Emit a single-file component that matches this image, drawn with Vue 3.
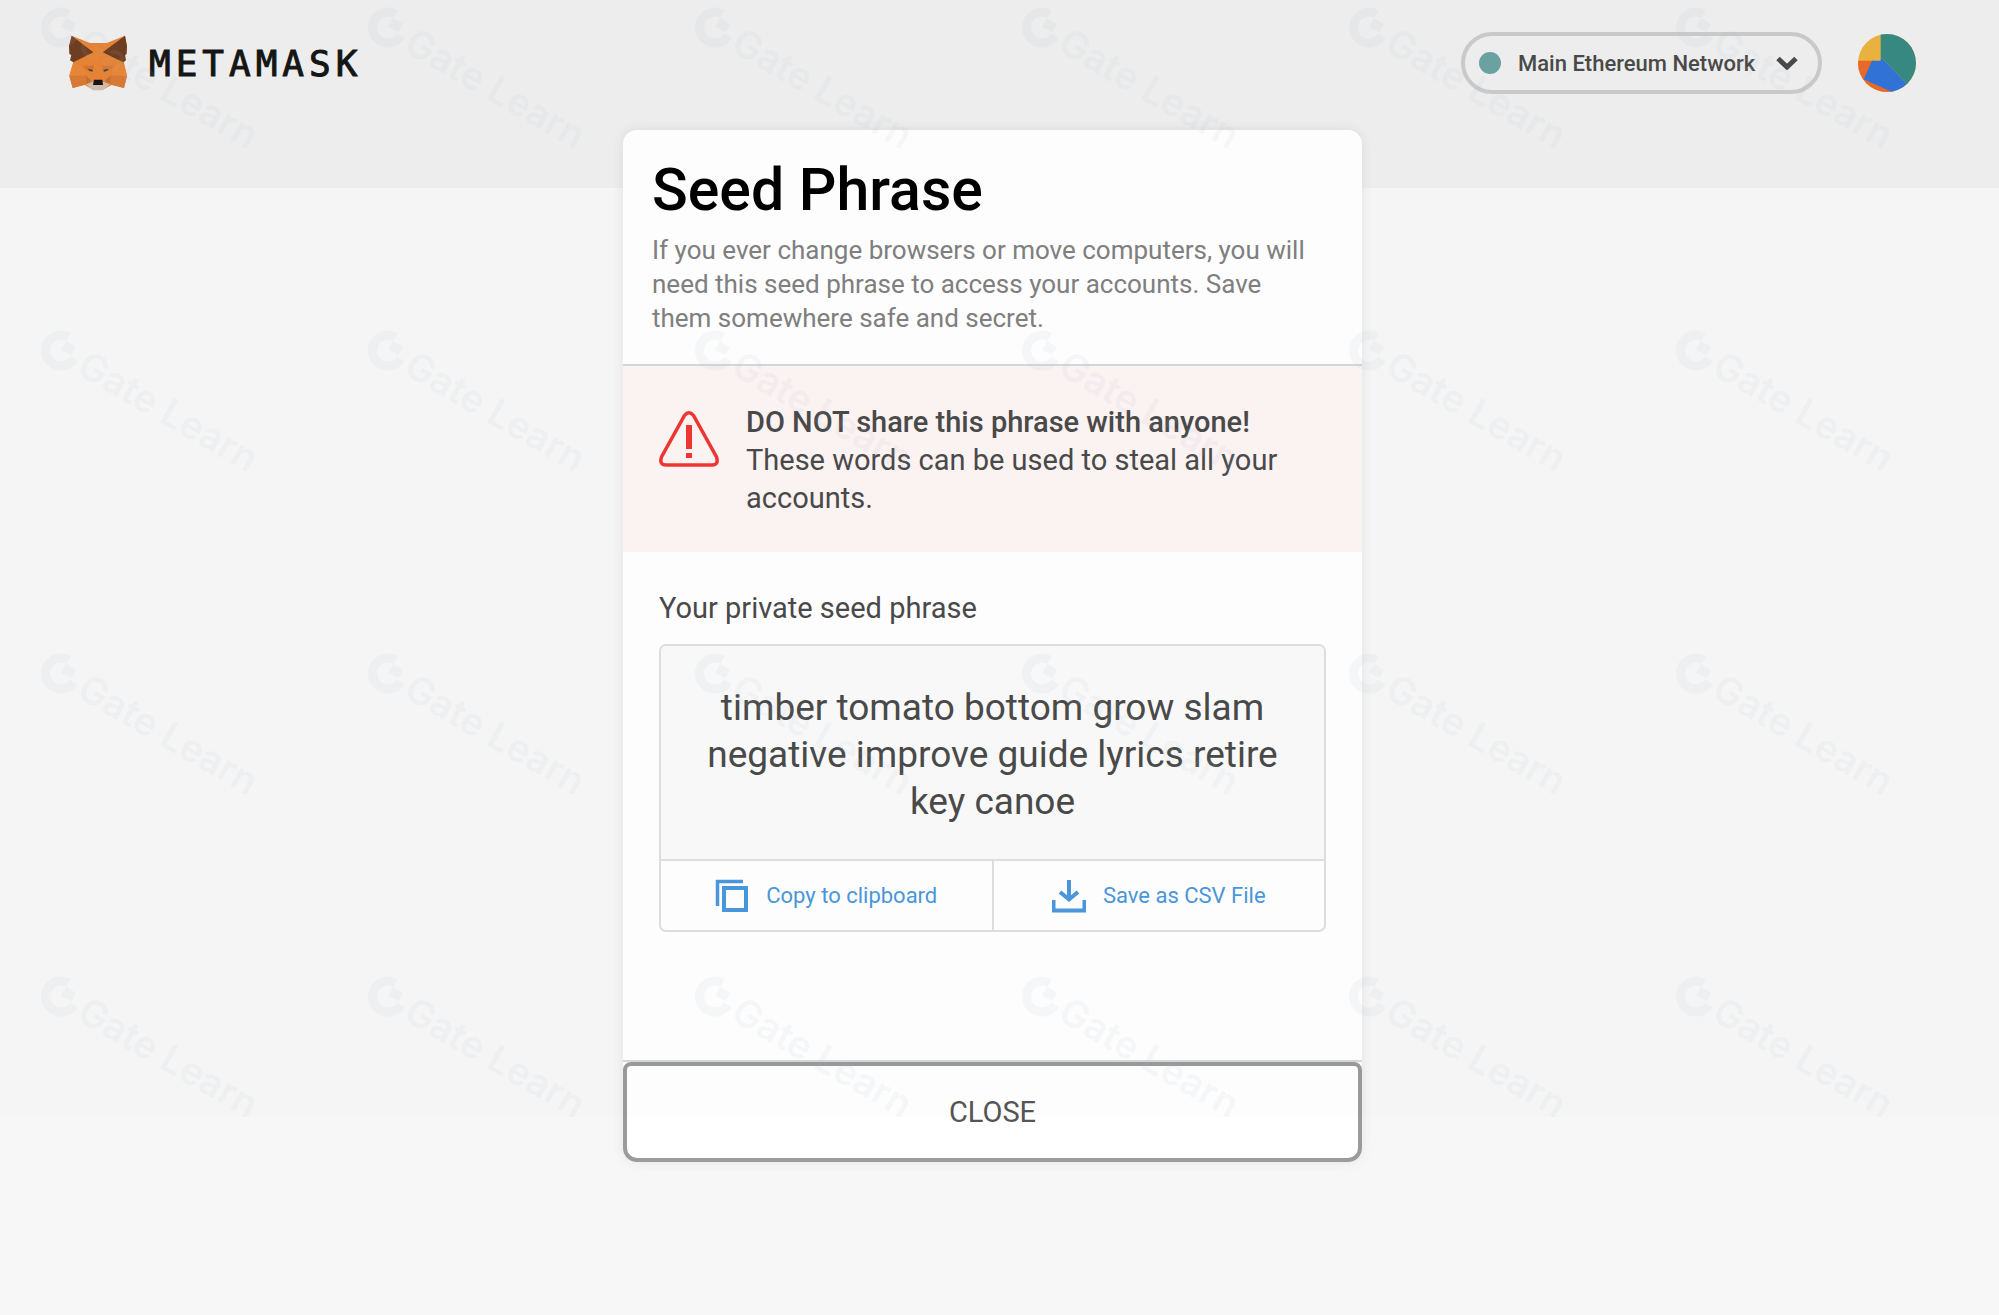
<template>
  <div class="page">
    <header class="top-bar">
      <a class="brand" href="#" aria-label="MetaMask">
        <svg class="fox" viewBox="55 46 178 168" aria-hidden="true">
          <polygon fill="#e88435" points="65,48 120,70 170,70 225,48 231,80 222,130 231,168 222,205 185,196 158,210 130,210 104,196 68,205 58,168 70,128 57,80" />
          <polygon fill="#d87a38" points="58,168 107,167 122,190 68,205" />
          <polygon fill="#d87a38" points="231,168 182,167 166,190 222,205" />
          <polygon fill="#e98838" points="70,128 58,168 107,167 97,140" />
          <polygon fill="#e98838" points="220,128 231,168 182,167 192,140" />
          <polygon fill="#6e3f22" points="65,48 130,98 70,128 60,122 64,106 58,103 57,80" />
          <polygon fill="#6e3f22" points="225,48 158,98 220,128 228,122 225,106 230,103 231,80" />
          <polygon fill="#d77532" points="98,139 132,137 129,154 110,152" />
          <polygon fill="#d77532" points="191,139 157,137 160,154 179,152" />
          <polygon fill="#c46f38" points="107,167 124,183 110,192" />
          <polygon fill="#c46f38" points="182,167 165,183 179,192" />
          <polygon fill="#3a4a52" points="113,147 128,150 128,156 118,154" />
          <polygon fill="#3a4a52" points="176,147 161,150 161,156 171,154" />
          <polygon fill="#d0bdb0" points="108,194 130,186 158,186 180,194 158,212 130,212" />
          <polygon fill="#161616" points="132,180 157,180 159,196 129,196" />
        </svg>
        <span class="wordmark">METAMASK</span>
      </a>

      <div class="account">
        <label class="network">
          <span class="network-dot"></span>
          <select v-model="network" class="network-select" aria-label="Network">
            <option v-for="name in networks" :key="name">{{ name }}</option>
          </select>
          <svg class="chevron" viewBox="0 0 22 14" aria-hidden="true">
            <path d="M2 2.500L11 11L20 2.500" fill="none" stroke="#4a4a4a" stroke-width="5" />
          </svg>
        </label>
        <button class="avatar" type="button" aria-label="My accounts">
          <svg viewBox="1253 42 174 174" aria-hidden="true">
            <rect x="1253" y="42" width="174" height="174" fill="#ebb33f" />
            <polygon fill="#ea6a29" points="1253,122 1300,122 1360,216 1253,216" />
            <polygon fill="#398a84" points="1321,42 1427,42 1427,216 1400,192 1321,110" />
            <polygon fill="#3273d9" points="1321,110 1400,192 1427,216 1355,216 1270,178 1295,122 1321,122" />
          </svg>
        </button>
      </div>
    </header>

    <main class="main">
      <section class="card">
        <div class="card-header">
          <h1 class="title">Seed Phrase</h1>
          <p class="detail">
            If you ever change browsers or move computers, you will need this seed phrase to access your accounts.
            Save them somewhere safe and secret.
          </p>
        </div>

        <div class="warning">
          <svg class="warning-icon" viewBox="0 0 60 56" aria-hidden="true">
            <path d="M25.500 4.500Q30 -1 34.500 4.500L57.500 46Q60 54 53 54H7Q0 54 2.500 46Z" fill="none" stroke="#f03632" stroke-width="3.500" />
            <path d="M27 14h6v24h-6zM27 42h6v5h-6z" fill="#f03632" />
          </svg>
          <p class="warning-text">
            <strong>DO NOT share this phrase with anyone!</strong><br />
            These words can be used to steal all your accounts.
          </p>
        </div>

        <div class="secret">
          <h2 class="secret-label">Your private seed phrase</h2>
          <div class="secret-box">
            <p class="words">{{ seedPhrase }}</p>
            <div class="actions">
              <button class="action" type="button" @click="copyPhrase">
                <svg class="action-icon" viewBox="0 0 34 34" aria-hidden="true">
                  <path d="M2.500 27V2.500H28" fill="none" stroke="#4a98dc" stroke-width="3.500" />
                  <rect x="9" y="9" width="22" height="22" fill="none" stroke="#4a98dc" stroke-width="4" />
                </svg>
                Copy to clipboard
              </button>
              <button class="action" type="button" @click="saveCsv">
                <svg class="action-icon" viewBox="0 0 34 34" aria-hidden="true">
                  <path d="M1.500 21V31.500H32.500V21" fill="none" stroke="#4a98dc" stroke-width="4" />
                  <path d="M17 1V20M8 13L17 20.500L26 13" fill="none" stroke="#4a98dc" stroke-width="4" />
                </svg>
                Save as CSV File
              </button>
            </div>
          </div>
        </div>

        <div class="card-footer">
          <button class="close" type="button">CLOSE</button>
        </div>
      </section>
    </main>

    <div class="watermarks" aria-hidden="true">
      <svg v-for="n in 24" :key="n" class="watermark" viewBox="0 0 327 323">
        <path d="M68.500 14A15.500 15.500 0 1 0 74 36" fill="none" stroke="currentColor" stroke-width="9" />
        <path d="M66 18L76 24L71.500 32L61 27Z" fill="currentColor" />
        <text transform="translate(75 50) rotate(30)">Gate Learn</text>
      </svg>
    </div>
  </div>
</template>

<script setup>
import { ref } from 'vue';

const networks = ['Main Ethereum Network', 'Ropsten Test Network', 'Kovan Test Network', 'Rinkeby Test Network'];
const network = ref(networks[0]);

const seedPhrase = 'timber tomato bottom grow slam negative improve guide lyrics retire key canoe';

const copyPhrase = () => {
  navigator.clipboard.writeText(seedPhrase);
};

const saveCsv = () => {
  const url = URL.createObjectURL(new Blob([seedPhrase], { type: 'text/csv' }));
  const link = document.createElement('a');
  link.href = url;
  link.download = 'seed-phrase.csv';
  link.click();
  URL.revokeObjectURL(url);
};
</script>

<style>
body {
  background-color: #f7f7f7;
}
</style>

<style scoped>
.page {
  position: relative;
  min-height: 100vh;
  overflow: hidden;
  color: #4a4a4a;
  font-family: Roboto, "Liberation Sans", sans-serif;
}

.page * {
  box-sizing: border-box;
}

h1,
h2,
p {
  margin: 0;
}

button,
select {
  padding: 0;
  border: 0;
  background: none;
  color: inherit;
  font-family: inherit;
  cursor: pointer;
}

.top-bar {
  display: flex;
  align-items: flex-start;
  justify-content: space-between;
  height: 188px;
  padding: 32px 83px 0 68px;
  background-color: #efefef;
}

.brand {
  display: flex;
  align-items: center;
  gap: 21px;
  height: 62px;
  color: #161616;
  text-decoration: none;
}

.fox {
  width: 60px;
  height: 56px;
}

.wordmark {
  font-family: "DejaVu Sans Mono", monospace;
  font-size: 36px;
  letter-spacing: 5px;
  -webkit-text-stroke: 1px #161616;
}

.account {
  display: flex;
  align-items: center;
  gap: 36px;
}

.network {
  display: flex;
  align-items: center;
  height: 62px;
  padding: 0 20px 0 14px;
  border: 4px solid #cbcbcb;
  border-radius: 31px;
}

.network-dot {
  width: 22px;
  height: 22px;
  margin-right: 17px;
  border-radius: 50%;
  background-color: #6ba3a3;
}

.network-select {
  appearance: none;
  margin-right: 20px;
  font-size: 22px;
  font-weight: 500;
}

.chevron {
  width: 22px;
  height: 14px;
}

.avatar {
  width: 58px;
  height: 58px;
  border-radius: 50%;
  overflow: hidden;
}

.avatar svg {
  display: block;
}

.main {
  display: flex;
  justify-content: center;
  margin-top: -58px;
  padding: 0 14px 60px 0;
}

.card {
  width: 739px;
  border-radius: 14px;
  background-color: #fff;
  box-shadow: 0 0 13px rgba(0, 0, 0, 0.08);
}

.card-header {
  padding: 30px 44px 29px 29px;
  border-bottom: 2px solid #d5d9dd;
}

.title {
  margin-bottom: 13px;
  color: #000;
  font-size: 59px;
  font-weight: 500;
  line-height: 60px;
}

.detail {
  color: #808080;
  font-size: 26px;
  line-height: 34px;
}

.warning {
  display: flex;
  gap: 27px;
  padding: 37px 36px 35px;
  background-color: #fdf4f4;
}

.warning-icon {
  flex-shrink: 0;
  width: 60px;
  height: 56px;
  margin-top: 8px;
}

.warning-text {
  font-size: 29px;
  line-height: 38px;
}

.warning-text strong {
  font-weight: 500;
}

.secret {
  padding: 39px 36px 128px;
}

.secret-label {
  margin-bottom: 19px;
  font-size: 29px;
  font-weight: 400;
  line-height: 34px;
}

.secret-box {
  border: 2px solid #dfdfdf;
  border-radius: 7px;
  overflow: hidden;
}

.words {
  padding: 38px 40px 34px;
  background-color: #fafafa;
  font-size: 37px;
  line-height: 47px;
  text-align: center;
}

.actions {
  display: flex;
  border-top: 2px solid #dfdfdf;
}

.action {
  display: flex;
  flex: 1;
  align-items: center;
  justify-content: center;
  gap: 17px;
  height: 69px;
  color: #4a98dc;
  font-size: 22px;
}

.action + .action {
  border-left: 2px solid #dfdfdf;
}

.action-icon {
  width: 34px;
  height: 34px;
}

.card-footer {
  border-top: 2px solid #d5d9dd;
}

.close {
  display: block;
  width: 100%;
  height: 100px;
  border: 4px solid #9b9b9b;
  border-radius: 8px 8px 14px 14px;
  color: #555;
  font-size: 29px;
}

.watermarks {
  position: absolute;
  top: 0;
  left: 0;
  right: 0;
  display: grid;
  grid-template-columns: repeat(6, 327px);
  grid-auto-rows: 323px;
  height: 1117px;
  overflow: hidden;
  background-color: rgba(0, 0, 0, 0.008);
  color: rgba(165, 185, 200, 0.1);
  pointer-events: none;
}

.watermark text {
  fill: currentColor;
  font-family: Inter, sans-serif;
  font-size: 38px;
  font-weight: 600;
}
</style>
